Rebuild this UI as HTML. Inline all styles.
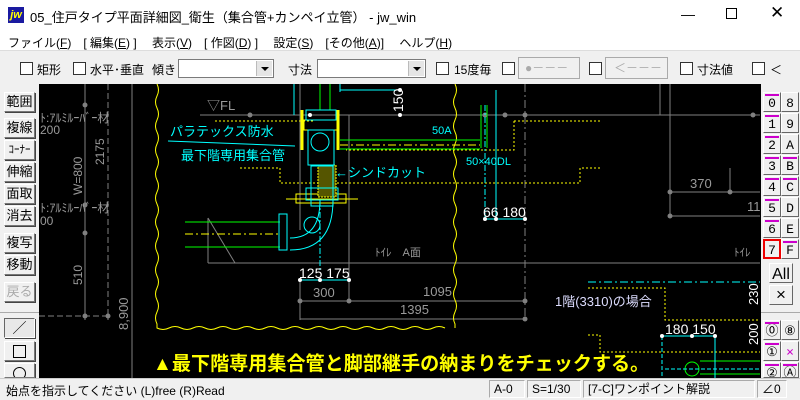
<!DOCTYPE html><html><head><meta charset="utf-8"><style>
*{margin:0;padding:0;box-sizing:border-box}
body{width:800px;height:400px;overflow:hidden;background:#f0f0f0;font-family:"Liberation Sans","Noto Sans CJK JP",sans-serif;font-size:12px;color:#000;position:relative}
.a{position:absolute}
.btn{position:absolute;background:#f0f0f0;border:1px solid;border-color:#fff #777 #777 #fff;box-shadow:1px 1px 0 #444;font-size:13px;text-align:center;line-height:18px}
.cb{position:absolute;width:13px;height:13px;border:1px solid #333;background:#fff;top:62px}
.sel{position:absolute;top:59px;height:19px;border:1px solid #7a7a7a;background:#fff}
.sel i{position:absolute;right:1px;top:1px;width:16px;height:15px;background:#e5e5e5;border-left:1px solid #bbb}
.sel i:after{content:"";position:absolute;left:4px;top:6px;border:4px solid transparent;border-top:4px solid #000}
.lb{position:absolute;width:18px;height:20px;background:#f0f0f0;border:1px solid;border-color:#fff #666 #666 #fff;font-family:"Liberation Mono",monospace;font-size:13px;text-align:center;line-height:22px}
.lb b{position:absolute;left:1px;top:1px;width:14px;height:2px;background:#c0c}
.st{position:absolute;top:380px;height:18px;border:1px solid;border-color:#aaa #fff #fff #aaa;line-height:17px;padding-left:4px;font-size:12px}
</style></head><body>
<div class="a" style="left:0;top:0;width:800px;height:50px;background:#fff"></div>
<div class="a" style="left:8px;top:7px;width:16px;height:16px;background:#1a1aa0;color:#ff0;font-size:11px;font-weight:bold;font-style:italic;line-height:16px;text-align:center">jw</div>
<div class="a" style="left:30px;top:7px;font-size:13px">05_住戸タイプ平面詳細図_衛生（集合管+カンペイ立管） - jw_win</div>
<div class="a" style="left:681px;top:6px;font-size:14px">—</div>
<div class="a" style="left:726px;top:8px;width:11px;height:11px;border:1px solid #000"></div>
<div class="a" style="left:770px;top:3px;font-size:17px">✕</div>
<div class="a" style="left:8px;top:34px;font-size:12px;word-spacing:0">ファイル(<u>F</u>)　[ 編集(<u>E</u>) ]　 表示(<u>V</u>)　[ 作図(<u>D</u>) ]　 設定(<u>S</u>)　[その他(<u>A</u>)]　 ヘルプ(<u>H</u>)</div>
<div class="a" style="left:0;top:50px;width:800px;height:1px;background:#ddd"></div>
<div class="cb" style="left:20px"></div><div class="a" style="left:37px;top:61px">矩形</div>
<div class="cb" style="left:73px"></div><div class="a" style="left:90px;top:61px">水平･垂直</div>
<div class="a" style="left:152px;top:61px">傾き</div>
<div class="sel" style="left:178px;width:96px"><i></i></div>
<div class="a" style="left:288px;top:61px">寸法</div>
<div class="sel" style="left:317px;width:109px"><i></i></div>
<div class="cb" style="left:436px"></div><div class="a" style="left:454px;top:61px">15度毎</div>
<div class="cb" style="left:502px"></div>
<div class="a" style="left:518px;top:57px;width:62px;height:22px;border:1px solid #aaa;color:#aaa;line-height:20px;padding-left:6px">●－－－</div>
<div class="cb" style="left:589px"></div>
<div class="a" style="left:605px;top:57px;width:63px;height:22px;border:1px solid #aaa;color:#aaa;line-height:20px;padding-left:8px">＜－－－</div>
<div class="cb" style="left:680px"></div><div class="a" style="left:697px;top:61px">寸法値</div>
<div class="cb" style="left:752px"></div><div class="a" style="left:770px;top:61px">＜</div>
<div class="a" style="left:0;top:84px;width:39px;height:294px;background:#f0f0f0"></div>
<div class="btn" style="left:4px;top:92px;width:31px;height:20px">範囲</div>
<div class="btn" style="left:4px;top:118px;width:31px;height:20px">複線</div>
<div class="btn" style="left:4px;top:140px;width:31px;height:20px;font-size:11px">ｺｰﾅｰ</div>
<div class="btn" style="left:4px;top:162px;width:31px;height:20px">伸縮</div>
<div class="btn" style="left:4px;top:184px;width:31px;height:20px">面取</div>
<div class="btn" style="left:4px;top:206px;width:31px;height:20px">消去</div>
<div class="btn" style="left:4px;top:233px;width:31px;height:20px">複写</div>
<div class="btn" style="left:4px;top:255px;width:31px;height:20px">移動</div>
<div class="btn" style="left:4px;top:282px;width:31px;height:20px;color:#aaa">戻る</div>
<div class="a" style="left:0;top:312px;width:39px;height:1px;background:#aaa"></div>
<div class="btn" style="left:4px;top:318px;width:31px;height:20px;background:#e8e8e8;border-color:#666 #fff #fff #666;font-size:14px">／</div>
<div class="btn" style="left:4px;top:341px;width:31px;height:20px"><span style="display:inline-block;width:13px;height:13px;border:1px solid #000;margin-top:3px"></span></div>
<div class="btn" style="left:4px;top:363px;width:31px;height:15px;overflow:hidden"><span style="display:inline-block;width:13px;height:13px;border:1px solid #000;border-radius:50%;margin-top:3px"></span></div>
<svg class="a" style="left:39px;top:84px" width="722" height="294" viewBox="39 84 722 294" font-family="Liberation Sans,Noto Sans CJK JP,sans-serif">
<rect x="39" y="84" width="722" height="294" fill="#000"/>
<g stroke="#808080" fill="none" stroke-width="1">
<line x1="85" y1="84" x2="85" y2="320"/><line x1="108" y1="84" x2="108" y2="320" stroke-dasharray="6 3"/><line x1="132" y1="84" x2="132" y2="378"/>
<line x1="39" y1="316" x2="108" y2="316" stroke-dasharray="6 3"/>
<line x1="200" y1="115" x2="760" y2="115"/>
<line x1="208" y1="218" x2="208" y2="263"/><line x1="208" y1="218" x2="235" y2="263"/>
<line x1="208" y1="263" x2="760" y2="263"/>
<line x1="300" y1="280" x2="300" y2="320"/><line x1="349" y1="115" x2="349" y2="300"/>
<line x1="300" y1="301" x2="525" y2="301"/><line x1="300" y1="319" x2="525" y2="319"/>
<line x1="525" y1="84" x2="525" y2="319" stroke-dasharray="8 3 2 3"/>
<line x1="670" y1="84" x2="670" y2="216"/><line x1="670" y1="192" x2="760" y2="192"/><line x1="670" y1="216" x2="760" y2="216"/><line x1="730" y1="168" x2="730" y2="192"/>
<line x1="300" y1="84" x2="300" y2="230"/><line x1="660" y1="84" x2="660" y2="115"/>
</g>
<g fill="#808080"><circle cx="85" cy="105" r="2.5"/><circle cx="85" cy="205" r="2.5"/><circle cx="85" cy="233" r="2.5"/><circle cx="85" cy="316" r="2.5"/><circle cx="108" cy="316" r="2.5"/>
<circle cx="250" cy="115" r="2.5"/><circle cx="485" cy="115" r="2.5"/><circle cx="505" cy="115" r="2.5"/><circle cx="525" cy="115" r="2.5"/><circle cx="753" cy="115" r="2.5"/>
<circle cx="300" cy="301" r="2.5"/><circle cx="349" cy="301" r="2.5"/><circle cx="525" cy="301" r="2.5"/><circle cx="525" cy="319" r="2.5"/><circle cx="670" cy="192" r="2.5"/><circle cx="730" cy="192" r="2.5"/><circle cx="670" cy="216" r="2.5"/></g>
<g fill="#9a9a9a" font-size="12">
<text x="40" y="122">ﾄ:ｱﾙﾐﾙｰﾊﾞｰ材</text><text x="40" y="134">200</text>
<text x="40" y="212">ﾄ:ｱﾙﾐﾙｰﾊﾞｰ材</text><text x="40" y="225">00</text>
<text transform="translate(104,165) rotate(-90)">2175</text>
<text transform="translate(82,195) rotate(-90)">W=800</text>
<text transform="translate(82,285) rotate(-90)">510</text>
<text transform="translate(128,330) rotate(-90)" font-size="13">8,900</text>
<text x="207" y="110" font-size="13">▽FL</text>
<text x="313" y="297" font-size="13">300</text><text x="423" y="296" font-size="13">1095</text><text x="400" y="314" font-size="13">1395</text>
<text x="690" y="188" font-size="13">370</text><text x="747" y="211" font-size="13">11</text>
<text x="375" y="256" font-size="11">ﾄｲﾚ　A面</text><text x="734" y="256" font-size="11">ﾄｲﾚ</text>
</g>
<g fill="none" stroke="#ff0" stroke-width="1">
<path d="M157 84 q3 6 0 12 q-3 6 0 12 q3 6 0 12 q-3 6 0 12 q3 6 0 12 q-3 6 0 12 q3 6 0 12 q-3 6 0 12 q3 6 0 12 q-3 6 0 12 q3 6 0 12 q-3 6 0 12 q3 6 0 12 q-3 6 0 12 q3 6 0 12 q-3 6 0 12 q3 6 0 12 q-3 6 0 12 q3 6 0 12 q-3 6 0 12 l0 4 q6 3 12 0 q6 -3 12 0 q6 3 12 0 q6 -3 12 0 q6 3 12 0 q6 -3 12 0 q6 3 12 0 q6 -3 12 0 q6 3 12 0 q6 -3 12 0 q6 3 12 0 q6 -3 12 0 q6 3 12 0 q6 -3 12 0 q6 3 12 0 q6 -3 12 0 q6 3 12 0 q6 -3 12 0 q6 3 12 0 q6 -3 12 0 q6 3 12 0 q6 -3 12 0 q6 3 12 0 q6 -3 12 0 l0 0"/>
<path d="M455 84 q3 6 0 12 q-3 6 0 12 q3 6 0 12 q-3 6 0 12 q3 6 0 12 q-3 6 0 12 q3 6 0 12 q-3 6 0 12 q3 6 0 12 q-3 6 0 12 q3 6 0 12 q-3 6 0 12 q3 6 0 12 q-3 6 0 12 q3 6 0 12 q-3 6 0 12 q3 6 0 12 q-3 6 0 12 q3 6 0 12 q-3 6 0 12 l0 4"/>
<g stroke-dasharray="2 2"><path d="M215 121 H315"/><path d="M514 121 H602"/><path d="M514 121 V150 H346"/><path d="M240 168 H280 V183 H580 V168 H602"/><path d="M588 288 H665 V320 H760"/><path d="M588 335 H600 V352 H760"/></g>
<path d="M185 234 H280" stroke-dasharray="8 3 2 3"/><path d="M340 145 H480" stroke-dasharray="8 3 2 3"/>
<rect x="304" y="120" width="34" height="10"/><rect x="296" y="194" width="50" height="9"/><line x1="286" y1="199" x2="358" y2="199"/>
<line x1="302" y1="110" x2="302" y2="150" stroke-width="3"/><line x1="338" y1="110" x2="338" y2="150" stroke-width="3"/>
<rect x="318" y="165" width="18" height="32" fill="#550" stroke-dasharray="2 1"/>
</g>
<g stroke="#0f0" fill="none"><line x1="340" y1="140" x2="480" y2="140"/><line x1="340" y1="149" x2="480" y2="149"/><line x1="185" y1="222" x2="280" y2="222"/><line x1="185" y1="247" x2="280" y2="247"/>
<line x1="320" y1="84" x2="320" y2="110"/><line x1="330" y1="84" x2="330" y2="110"/><line x1="481" y1="105" x2="481" y2="148"/><line x1="487" y1="105" x2="487" y2="148"/><circle cx="692" cy="369" r="7"/><line x1="700" y1="361" x2="760" y2="361"/><line x1="700" y1="374" x2="760" y2="374"/></g>
<g stroke="#0ff" fill="none">
<rect x="306" y="110" width="30" height="10"/><rect x="308" y="130" width="26" height="35"/><circle cx="320" cy="142" r="9"/><rect x="311" y="166" width="22" height="40"/><rect x="306" y="188" width="32" height="12"/>
<path d="M333 200 Q333 250 290 250"/><path d="M320 200 Q320 238 290 238"/><rect x="279" y="214" width="8" height="36"/><circle cx="312" cy="225" r="8"/>
<line x1="320" y1="200" x2="320" y2="270" stroke-dasharray="6 2 2 2"/>
<line x1="168" y1="141" x2="295" y2="146"/>
<line x1="294" y1="84" x2="294" y2="115"/><line x1="340" y1="84" x2="340" y2="92"/><line x1="340" y1="90" x2="400" y2="90"/>
<line x1="300" y1="280" x2="349" y2="280"/><line x1="485" y1="219" x2="525" y2="219"/><line x1="485" y1="105" x2="485" y2="219" stroke-dasharray="6 2 2 2"/><line x1="496" y1="90" x2="496" y2="219"/>
<line x1="588" y1="282" x2="760" y2="282" stroke-dasharray="8 3 2 3"/><line x1="662" y1="336" x2="715" y2="336"/><line x1="715" y1="336" x2="715" y2="378"/><line x1="662" y1="336" x2="662" y2="378" stroke-dasharray="4 2"/><line x1="665" y1="369" x2="760" y2="369" stroke-dasharray="4 2"/>
</g>
<g fill="#fff"><circle cx="300" cy="280" r="2"/><circle cx="320" cy="280" r="2"/><circle cx="349" cy="280" r="2"/><circle cx="485" cy="219" r="2"/><circle cx="496" cy="219" r="2"/><circle cx="525" cy="219" r="2"/><circle cx="662" cy="336" r="2"/><circle cx="692" cy="336" r="2"/><circle cx="715" cy="336" r="2"/><circle cx="400" cy="90" r="2"/><circle cx="400" cy="115" r="2"/><circle cx="310" cy="115" r="2"/></g>
<g fill="#0ff" font-size="13"><text x="170" y="136">パラテックス防水</text><text x="181" y="160">最下階専用集合管</text><text x="335" y="177">←シンドカット</text><text x="432" y="134" font-size="11">50A</text><text x="466" y="165" font-size="11">50×40DL</text></g>
<g fill="#fff" font-size="14"><text x="299" y="278">125 175</text><text x="483" y="217">66 180</text><text x="665" y="334">180 150</text><text x="555" y="306" font-size="13" fill="#ddf">1階(3310)の場合</text>
<text transform="translate(403,112) rotate(-90)">150</text><text transform="translate(758,305) rotate(-90)" font-size="13">230</text><text transform="translate(758,345) rotate(-90)" font-size="13">200</text></g>
<text x="153" y="370" fill="#ff0" font-size="19.1" font-weight="bold">▲最下階専用集合管と脚部継手の納まりをチェックする。</text>
</svg>
<div class="lb" style="left:763px;top:92px"><b></b>0</div><div class="lb" style="left:781px;top:92px">8</div>
<div class="lb" style="left:763px;top:113px"><b></b>1</div><div class="lb" style="left:781px;top:113px">9</div>
<div class="lb" style="left:763px;top:134px"><b></b>2</div><div class="lb" style="left:781px;top:134px">A</div>
<div class="lb" style="left:763px;top:155px"><b></b>3</div><div class="lb" style="left:781px;top:155px"><b></b>B</div>
<div class="lb" style="left:763px;top:176px"><b></b>4</div><div class="lb" style="left:781px;top:176px"><b></b>C</div>
<div class="lb" style="left:763px;top:197px"><b></b>5</div><div class="lb" style="left:781px;top:197px">D</div>
<div class="lb" style="left:763px;top:218px"><b></b>6</div><div class="lb" style="left:781px;top:218px">E</div>
<div class="lb" style="left:763px;top:239px;border:2px solid #e00;line-height:19px">7</div><div class="lb" style="left:781px;top:239px"><b></b>F</div>
<div class="lb" style="left:769px;top:263px;width:24px;font-family:'Liberation Sans';font-size:16px">All</div>
<div class="lb" style="left:769px;top:285px;width:24px;font-size:17px">×</div>
<div class="a" style="left:761px;top:312px;width:39px;height:1px;background:#aaa"></div>
<div class="lb" style="left:763px;top:320px"><b></b>⓪</div><div class="lb" style="left:781px;top:320px">⑧</div>
<div class="lb" style="left:763px;top:341px"><b></b>①</div><div class="lb" style="left:781px;top:341px;color:#c0c">⨯</div>
<div class="lb" style="left:763px;top:362px;height:16px;overflow:hidden"><b></b>②</div><div class="lb" style="left:781px;top:362px;height:16px;overflow:hidden"><b></b>Ⓐ</div>
<div class="a" style="left:0;top:378px;width:800px;height:22px;background:#f0f0f0;border-top:1px solid #ccc"></div>
<div class="a" style="left:6px;top:382px;font-size:12px">始点を指示してください (L)free (R)Read</div>
<div class="st" style="left:489px;width:36px">A-0</div>
<div class="st" style="left:527px;width:54px">S=1/30</div>
<div class="st" style="left:583px;width:172px">[7-C]ワンポイント解説</div>
<div class="st" style="left:757px;width:30px">∠0</div>
</body></html>
